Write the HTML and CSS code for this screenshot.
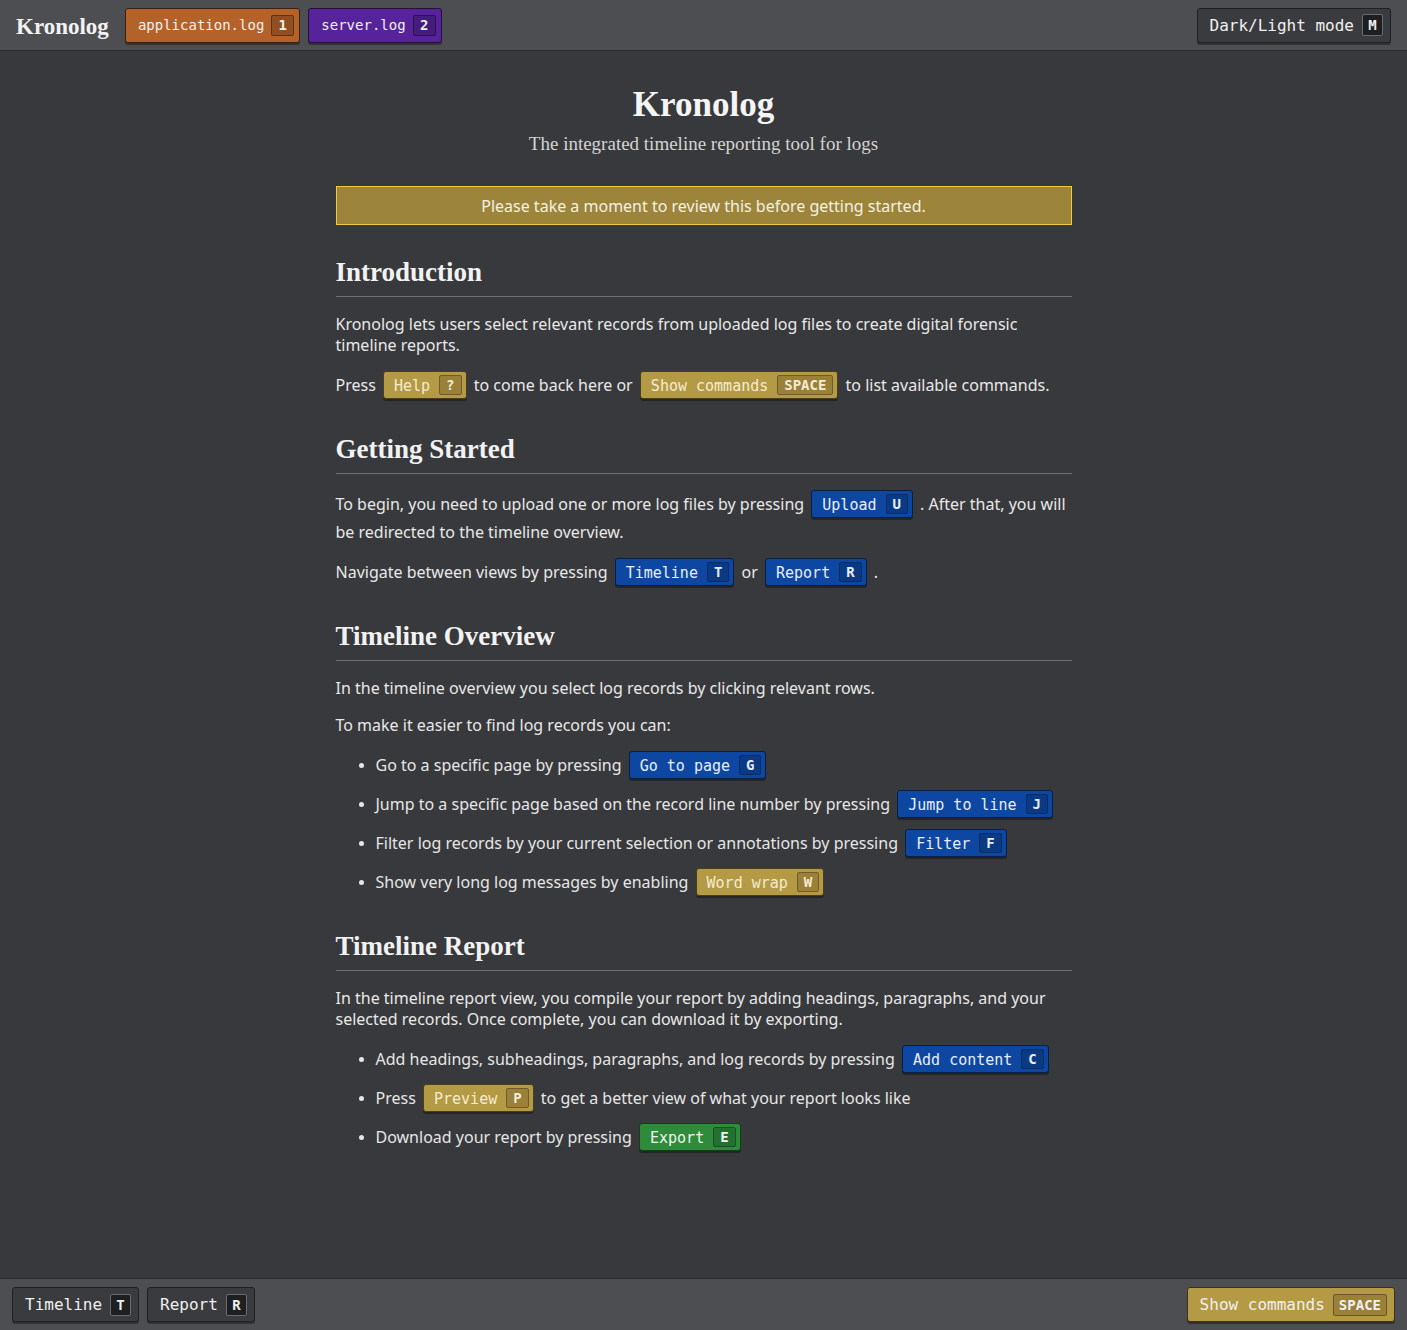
FILE: index.html
```html
<!DOCTYPE html>
<html lang="en">
<head>
<meta charset="utf-8">
<title>Kronolog</title>
<link rel="stylesheet" href="styles.css">
</head>
<body>
<div class="app">
  <header class="topbar">
    <div class="topbar-left">
      <span class="brand">Kronolog</span>
      <span class="tab tab-orange">application.log <span class="key">1</span></span>
      <span class="tab tab-purple">server.log <span class="key">2</span></span>
    </div>
    <span class="tab tab-dark big">Dark/Light mode <span class="key">M</span></span>
  </header>

  <main class="main">
    <div class="content">
      <h1 class="title">Kronolog</h1>
      <p class="subtitle">The integrated timeline reporting tool for logs</p>
      <div class="banner">Please take a moment to review this before getting started.</div>

      <h2 class="section">Introduction</h2>
      <p class="para">Kronolog lets users select relevant records from uploaded log files to create digital forensic timeline reports.</p>
      <p class="para line">Press <span class="btn gold">Help <span class="k">?</span></span> to come back here or <span class="btn gold">Show commands <span class="k">SPACE</span></span> to list available commands.</p>

      <h2 class="section">Getting Started</h2>
      <p class="para line">To begin, you need to upload one or more log files by pressing <span class="btn blue">Upload <span class="k">U</span></span> . After that, you will be redirected to the timeline overview.</p>
      <p class="para line">Navigate between views by pressing <span class="btn blue">Timeline <span class="k">T</span></span> or <span class="btn blue">Report <span class="k">R</span></span> .</p>

      <h2 class="section">Timeline Overview</h2>
      <p class="para">In the timeline overview you select log records by clicking relevant rows.</p>
      <p class="para">To make it easier to find log records you can:</p>
      <ul class="list">
        <li>Go to a specific page by pressing <span class="btn blue">Go to page <span class="k">G</span></span></li>
        <li>Jump to a specific page based on the record line number by pressing <span class="btn blue">Jump to line <span class="k">J</span></span></li>
        <li>Filter log records by your current selection or annotations by pressing <span class="btn blue">Filter <span class="k">F</span></span></li>
        <li>Show very long log messages by enabling <span class="btn gold">Word wrap <span class="k">W</span></span></li>
      </ul>

      <h2 class="section">Timeline Report</h2>
      <p class="para">In the timeline report view, you compile your report by adding headings, paragraphs, and your selected records. Once complete, you can download it by exporting.</p>
      <ul class="list">
        <li>Add headings, subheadings, paragraphs, and log records by pressing <span class="btn blue">Add content <span class="k">C</span></span></li>
        <li>Press <span class="btn gold">Preview <span class="k">P</span></span> to get a better view of what your report looks like</li>
        <li>Download your report by pressing <span class="btn green">Export <span class="k">E</span></span></li>
      </ul>
    </div>
  </main>

  <footer class="bottombar">
    <div class="bottombar-left">
      <span class="tab tab-dark big">Timeline <span class="key">T</span></span>
      <span class="tab tab-dark big">Report <span class="key">R</span></span>
    </div>
    <span class="tab tab-gold big">Show commands <span class="key">SPACE</span></span>
  </footer>
</div>
</body>
</html>
```

FILE: styles.css
```css
html, body {
  margin: 0;
  padding: 0;
  height: 100%;
}
body {
  background: #38393c;
  color: #e6e6e6;
  font-family: "Noto Sans", "DejaVu Sans", sans-serif;
  font-size: 16px;
}
.app {
  display: flex;
  flex-direction: column;
  height: 100vh;
}
.topbar {
  flex: 0 0 auto;
  height: 51px;
  box-sizing: border-box;
  background: #4d4e52;
  border-bottom: 1px solid #2a2b2d;
  display: flex;
  align-items: center;
  justify-content: space-between;
  padding: 0 16px 0 16px;
}
.topbar-left, .bottombar-left {
  display: flex;
  align-items: center;
  gap: 8px;
}
.brand {
  font-family: "Liberation Serif", "Times New Roman", serif;
  font-weight: bold;
  font-size: 23px;
  color: #f2f2f2;
  margin-right: 8px;
  position: relative;
  top: 2px;
}
.tab {
  display: inline-flex;
  align-items: center;
  gap: 7px;
  height: 35px;
  box-sizing: border-box;
  padding: 0 5px 0 12px;
  border: 1px solid #222;
  border-radius: 3px;
  box-shadow: 0 2px 0 rgba(0,0,0,0.35);
  font-family: "DejaVu Sans Mono", "Liberation Mono", monospace;
  font-size: 14px;
  color: #f0f0f0;
}
.tab .key {
  display: inline-flex;
  align-items: center;
  justify-content: center;
  min-width: 23px;
  height: 21px;
  box-sizing: border-box;
  padding: 0 4px;
  border: 1px solid rgba(0,0,0,0.35);
  border-radius: 2px;
  background: rgba(0,0,0,0.2);
  font-weight: bold;
  font-size: 14px;
}
.tab-orange { background: #b5622a; border-color: #3a2210; }
.tab-purple { background: #56239a; border-color: #22103d; }
.tab-dark { background: #3a3b3e; border-color: #1f2022; }
.tab-dark .key { background: #1e1f21; border-color: #6a6b6e; }
.tab-gold { background: #b59a45; border-color: #3d331a; }
.tab-gold .key { background: #9a8038; border-color: #6a5828; }
.tab.big { font-size: 16px; padding: 0 7px 0 12px; gap: 8px; }
.tab.big .key { height: 22px; min-width: 21px; font-size: 14px; padding: 0 5px; }

.main {
  flex: 1 1 auto;
  overflow: auto;
}
.content {
  width: 736px;
  margin: 0 auto;
  padding: 34px 0 40px;
}
.title {
  font-family: "Liberation Serif", "Times New Roman", serif;
  font-size: 35px;
  font-weight: bold;
  text-align: center;
  margin: 0;
  line-height: 40px;
  color: #f5f5f5;
}
.subtitle {
  font-family: "Liberation Serif", "Times New Roman", serif;
  font-size: 19px;
  text-align: center;
  margin: 8px 0 0;
  line-height: 22px;
  color: #d4d4d4;
}
.banner {
  margin-top: 31px;
  height: 39px;
  box-sizing: border-box;
  background: #9c853a;
  border: 1px solid #f0c93e;
  display: flex;
  align-items: center;
  justify-content: center;
  color: #f3f0e6;
  font-size: 16px;
}
.section {
  font-family: "Liberation Serif", "Times New Roman", serif;
  font-size: 27px;
  font-weight: bold;
  color: #f2f2f2;
  margin: 34px 0 0;
  padding-bottom: 8px;
  border-bottom: 1px solid #707174;
  line-height: 32px;
}
.banner + .section { margin-top: 31px; }
.para {
  margin: 16px 0 0;
  line-height: 21px;
  color: #e8e8e8;
}
.section + .para { margin-top: 17px; }
.para.line {
  line-height: 28px;
}
.section + .para.line { margin-top: 16px; }
.para + .para.line { margin-top: 15px; }
.para.line + .para.line { margin-top: 12px; }
.list {
  margin: 15px 0 0;
  padding-left: 40px;
}
.list li {
  line-height: 28px;
  margin-bottom: 11px;
}
.list li:last-child { margin-bottom: 0; }
.list li::marker { font-size: 14px; }

.btn {
  display: inline-flex;
  align-items: center;
  gap: 9px;
  height: 28px;
  box-sizing: border-box;
  padding: 2px 4px 0 10px;
  margin: 0 3px;
  vertical-align: top;
  border: 1px solid #1c1d1f;
  border-radius: 3px;
  box-shadow: 0 2px 0 rgba(0,0,0,0.35);
  font-family: "DejaVu Sans Mono", "Liberation Mono", monospace;
  font-size: 15px;
  line-height: 1;
}
.btn .k {
  display: inline-flex;
  align-items: center;
  justify-content: center;
  min-width: 22px;
  height: 20px;
  box-sizing: border-box;
  padding: 0 6px;
  margin-top: -2px;
  border: 1px solid rgba(0,0,0,0.35);
  border-radius: 2px;
  background: rgba(0,0,0,0.18);
  font-weight: bold;
  font-size: 14px;
}
.btn.gold { background: #b59a45; color: #f4ecd2; border-color: #4a3e1c; }
.btn.gold .k { background: #9a8038; border-color: #6e5c2a; }
.btn.blue { background: #0d47a1; color: #e8eefa; border-color: #0a1f44; }
.btn.blue .k { background: #0b3a85; border-color: #0a2c66; }
.btn.green { background: #2e8b3a; color: #eef8ee; border-color: #143d1a; }
.btn.green .k { background: #237030; border-color: #185222; }

.bottombar {
  flex: 0 0 auto;
  height: 52px;
  box-sizing: border-box;
  background: #4d4e52;
  border-top: 1px solid #2a2b2d;
  display: flex;
  align-items: center;
  justify-content: space-between;
  padding: 0 12px;
}
```
